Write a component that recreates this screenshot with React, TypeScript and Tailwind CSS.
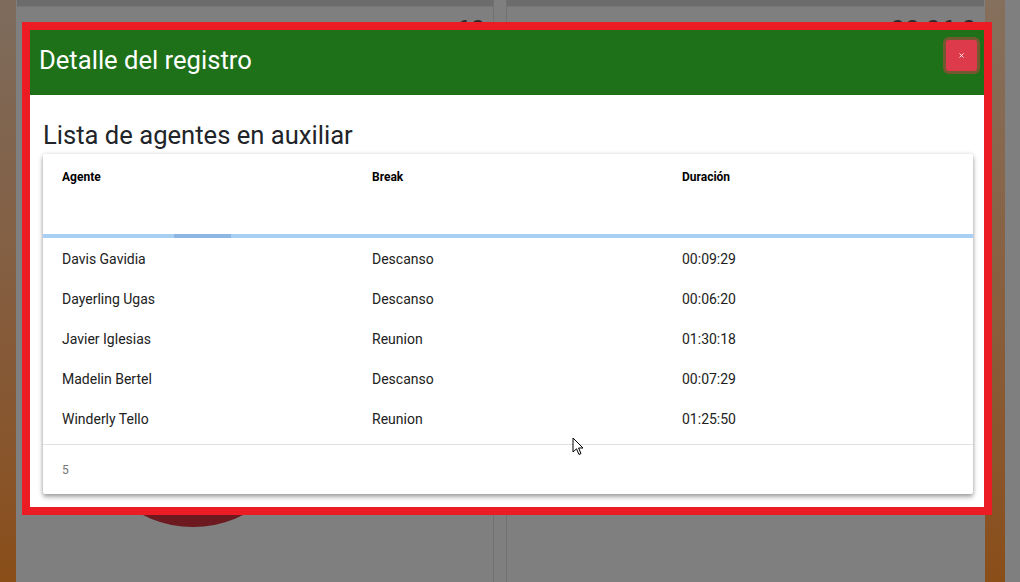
import { X } from "lucide-react";

type Row = { agente: string; brk: string; duracion: string };

const rows: Row[] = [
  { agente: "Davis Gavidia", brk: "Descanso", duracion: "00:09:29" },
  { agente: "Dayerling Ugas", brk: "Descanso", duracion: "00:06:20" },
  { agente: "Javier Iglesias", brk: "Reunion", duracion: "01:30:18" },
  { agente: "Madelin Bertel", brk: "Descanso", duracion: "00:07:29" },
  { agente: "Winderly Tello", brk: "Reunion", duracion: "01:25:50" },
];

function Background() {
  return (
    <div className="flex h-full w-full bg-[#7f7f7f]">
      {/* left orange strip (dimmed) */}
      <div className="w-[16px] h-full bg-gradient-to-b from-[#7d6b5c] to-[#8a4e18]" />

      <div className="flex-1 flex gap-[12px] pl-px">
        {/* left card */}
        <div className="w-[477px] flex flex-col border-r border-[#727272]">
          <div className="h-[6px] bg-[#6c6c6c]" />
          <div className="h-px bg-[#767676]" />
          <div className="flex justify-between items-start pt-[10px] px-[8px] h-[34px] text-[#2c2c2c]">
            <span className="text-[15px]">Realizadas</span>
            <span className="text-[26px] leading-none">60</span>
          </div>
          <div className="shrink-0 ml-[66px] mt-[266px] w-[220px] h-[220px] rounded-full bg-[#6c1a20]" />
        </div>

        {/* right card */}
        <div className="w-[478px] flex flex-col border-l border-[#727272]">
          <div className="h-[6px] bg-[#6c6c6c]" />
          <div className="h-px bg-[#767676]" />
          <div className="flex justify-between items-start pt-[10px] px-[8px] h-[34px] text-[#2c2c2c]">
            <span className="text-[15px]">Nivel de cumplimiento</span>
            <span className="text-[26px] leading-none">00:06:0</span>
          </div>
        </div>
      </div>

      {/* right orange strip (dimmed) */}
      <div className="w-[20px] h-full bg-gradient-to-b from-[#85705d] to-[#8a4e18]" />
      <div className="w-[15px] h-full bg-[#7f7f7f]" />
    </div>
  );
}

function Modal() {
  return (
    <div className="absolute left-[22px] top-[22px] w-[970px] h-[493px] border-8 border-[#ec1c24] bg-white flex flex-col">
      {/* header */}
      <div className="h-[65px] bg-[#1e7119] flex justify-between pl-[9px] pr-[7px]">
        <h1 className="text-[25.6px] text-white self-center leading-none pb-[4px]">Detalle del registro</h1>
        <button
          type="button"
          className="mt-[10px] w-[31px] h-[31px] rounded-[3px] bg-[#dd3a4b] shadow-[0_0_0_3px_rgba(222,58,75,0.45)] flex items-center justify-center text-white"
        >
          <X size={7} strokeWidth={3} />
        </button>
      </div>

      {/* body */}
      <div className="pl-[13px] pr-[11px]">
        <h2 className="mt-[25px] text-[25.6px] leading-[30px] text-[#212529]">Lista de agentes en auxiliar</h2>

        <div className="mt-[4px] bg-white rounded-[2px] shadow-[0_3px_5px_rgba(0,0,0,0.35),0_0_4px_rgba(0,0,0,0.12)]">
          {/* column headers */}
          <div className="h-[80px] grid grid-cols-3 pt-[15px] text-[12px] font-bold leading-[16px] text-black">
            <div className="pl-[19px]">Agente</div>
            <div className="pl-[19px]">Break</div>
            <div className="pl-[19px]">Duración</div>
          </div>

          {/* loading bar */}
          <div className="h-[4px] bg-[#a9cff3] flex">
            <div className="ml-[131px] w-[57px] h-full bg-[#8db7e3]" />
          </div>

          {/* rows */}
          <div className="pt-px pb-[5px]">
            {rows.map((r) => (
              <div key={r.agente} className="h-[40px] grid grid-cols-3 items-center text-[14px] text-[#212121]">
                <div className="pl-[19px]">{r.agente}</div>
                <div className="pl-[19px]">{r.brk}</div>
                <div className="pl-[19px]">{r.duracion}</div>
              </div>
            ))}
          </div>

          {/* footer */}
          <div className="h-[50px] border-t border-[#e0e0e0] flex items-center pl-[19px] text-[12px] text-[#757575]">
            5
          </div>
        </div>
      </div>
    </div>
  );
}

export default function App() {
  return (
    <div className="relative w-[1020px] h-[582px] overflow-hidden" style={{ fontFamily: "Roboto, 'Liberation Sans', sans-serif" }}>
      <Background />
      <Modal />

      {/* mouse pointer */}
      <svg className="absolute left-[572px] top-[437px]" width="13" height="20" viewBox="0 0 13 20">
        <path d="M1 1 L1 15 L4.5 11.8 L7 17.5 L9 16.6 L6.6 11 L11 11 Z" fill="#fff" stroke="#000" strokeWidth="1" strokeLinejoin="round" />
      </svg>
    </div>
  );
}
